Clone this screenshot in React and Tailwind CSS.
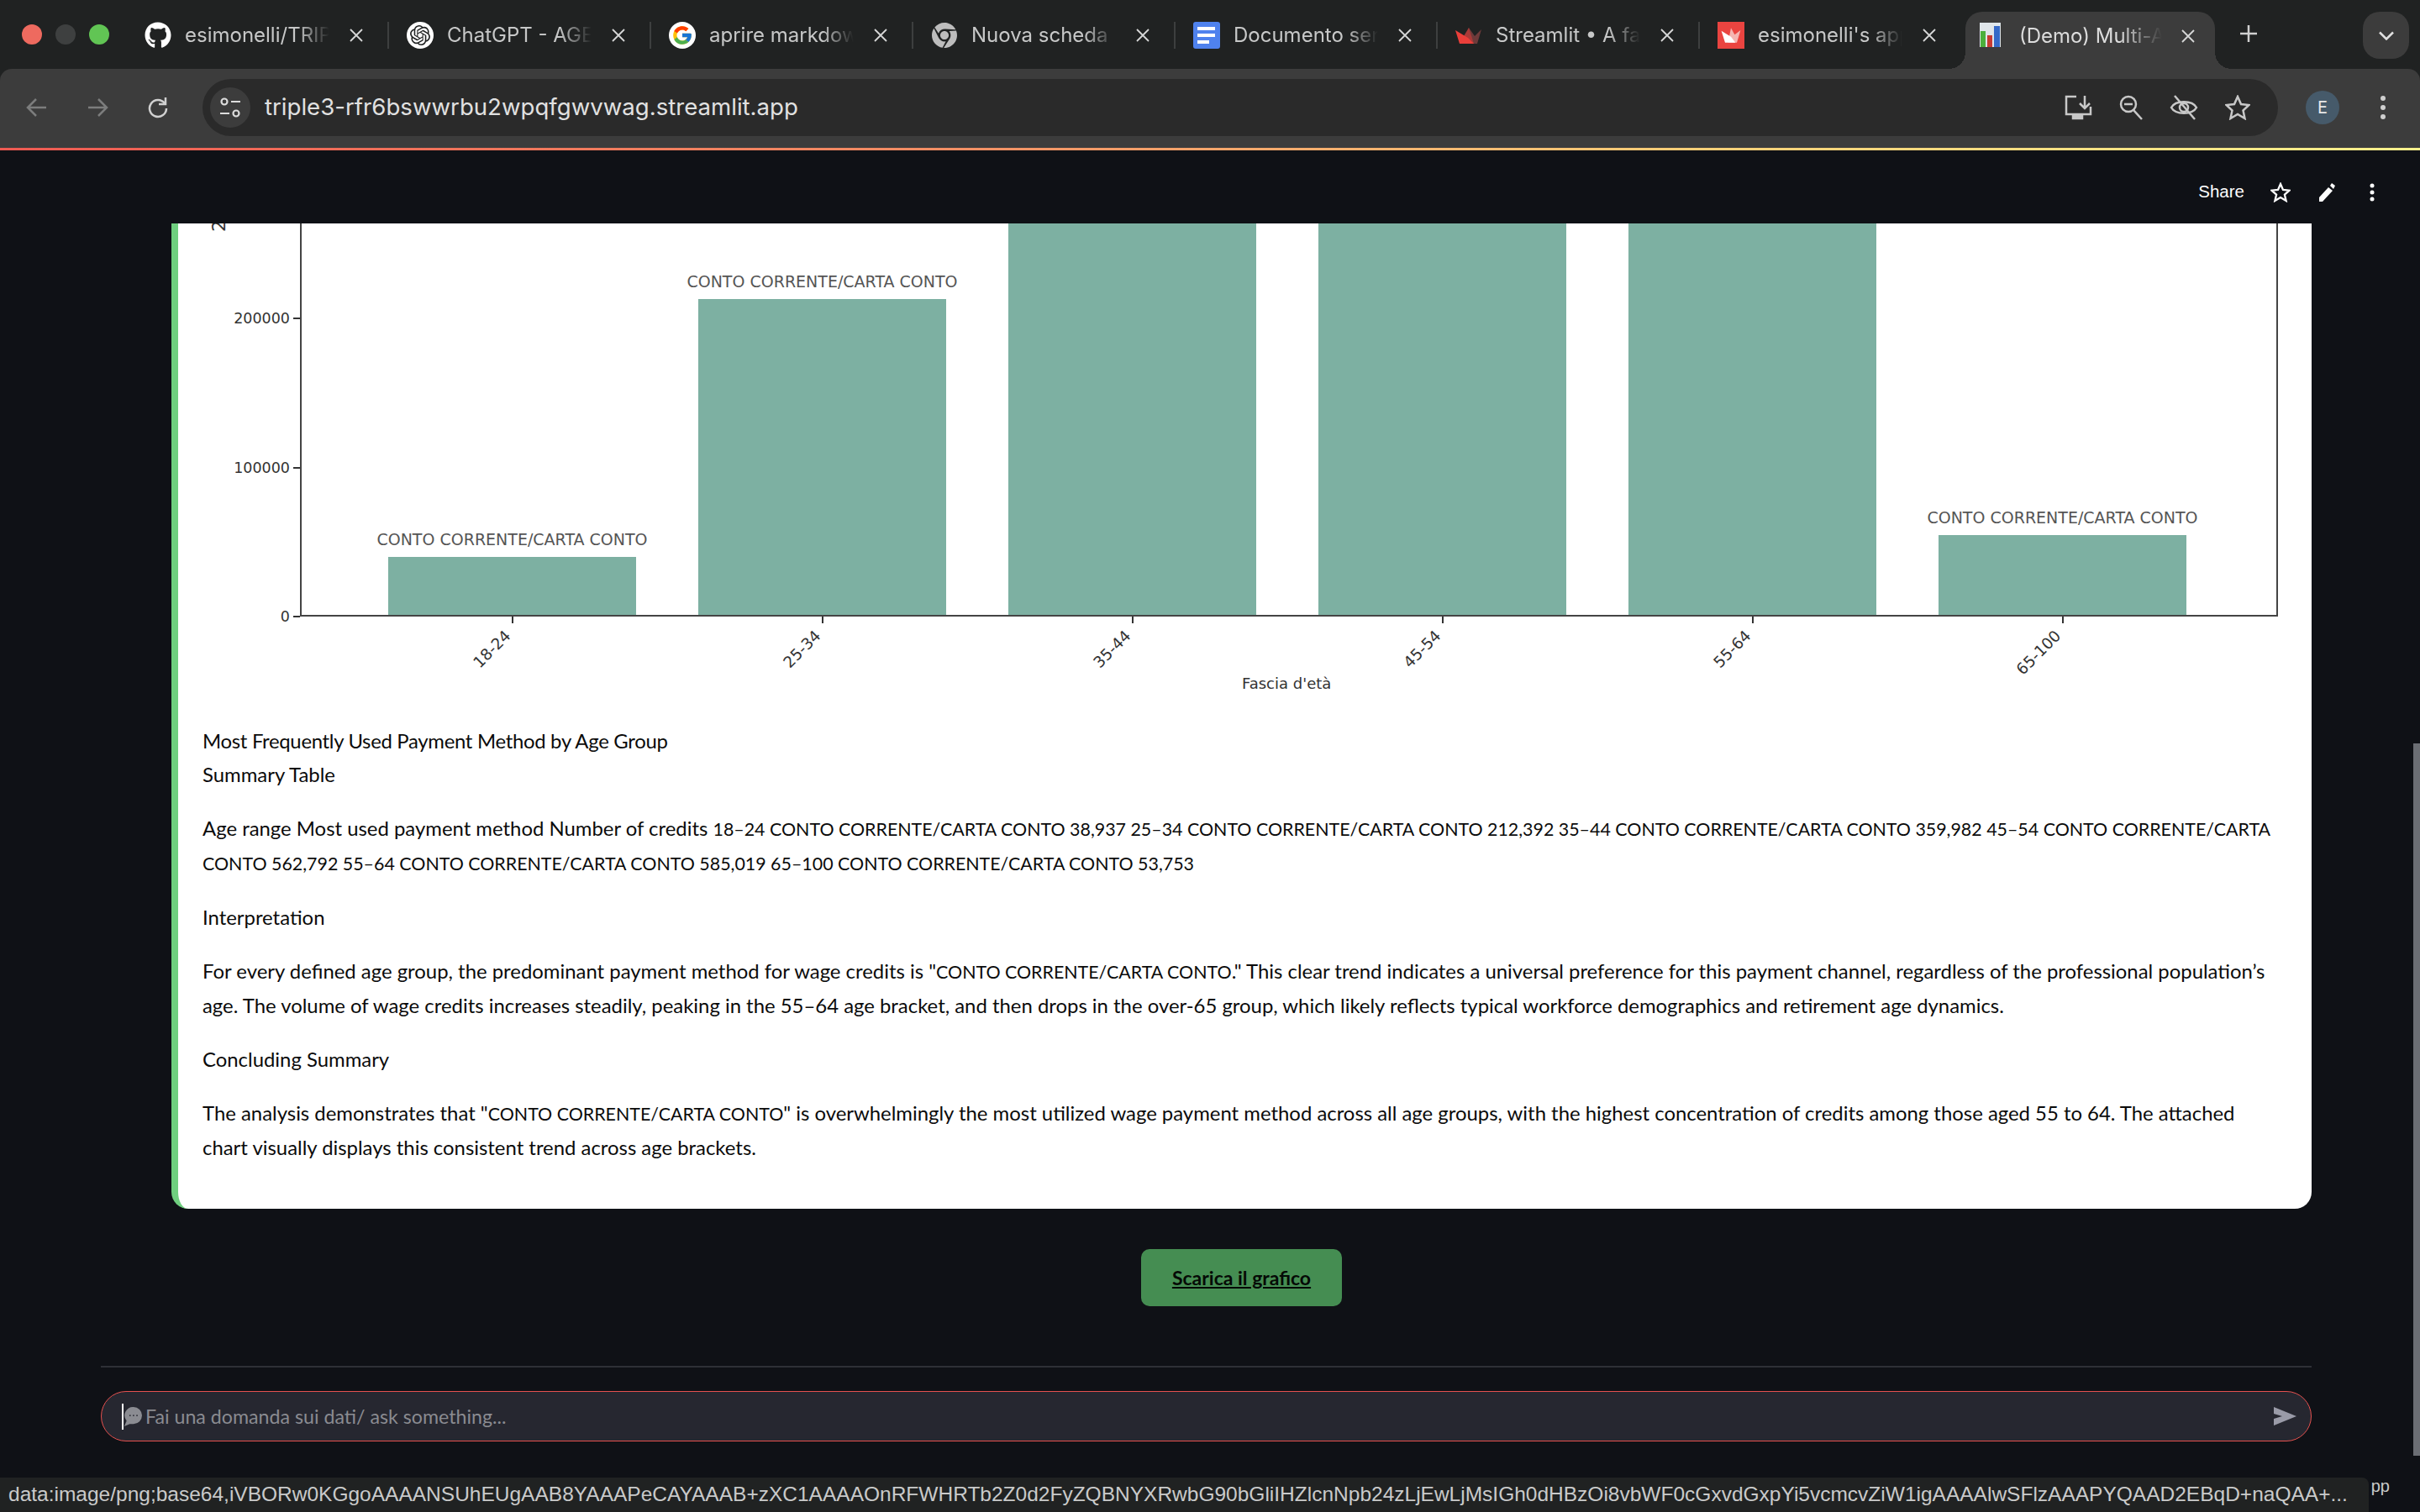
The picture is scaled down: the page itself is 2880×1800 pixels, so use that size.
import React from 'react';
import { FaGithub, FaChrome } from 'react-icons/fa';
import { FcGoogle } from 'react-icons/fc';
import { SiOpenai } from 'react-icons/si';

const Github = () => <FaGithub className="w-8 h-8 shrink-0 text-white" />;

const ChatGPT = () => (
  <div className="w-8 h-8 shrink-0 rounded-full bg-white flex items-center justify-center">
    <SiOpenai className="w-6 h-6 text-[#202222]" />
  </div>
);

const Google = () => (
  <div className="w-8 h-8 shrink-0 rounded-full bg-white flex items-center justify-center">
    <FcGoogle className="w-[26px] h-[26px]" />
  </div>
);

const Chrome = () => <FaChrome className="w-[30px] h-8 shrink-0 ml-[1px] mr-[1px] text-[#bdbdbd]" />;

const Docs = () => (
  <div className="w-8 h-8 shrink-0 rounded-[3px] bg-[#4f82ee] flex flex-col gap-[4px] pt-[6px] pl-[5px]">
    <div className="w-[21px] h-[4px] bg-white" />
    <div className="w-[21px] h-[4px] bg-white" />
    <div className="w-[14px] h-[4px] bg-white" />
  </div>
);

const Crown = () => (
  <svg viewBox="0 0 32 32" className="w-8 h-8 shrink-0">
    <path fill="#6e3a3a" d="M16 7l7 10 8-8-5 17H10z" />
    <path fill="#a83a38" d="M16 7l-6 10 9 9h3z" />
    <path fill="#ea3f3a" d="M0 10l15 9 7 7H5z" />
  </svg>
);

const CrownBox = () => (
  <div className="w-8 h-8 shrink-0 bg-[#ea4440] flex items-center justify-center">
    <svg viewBox="0 0 32 32" className="w-7 h-7">
      <path fill="#f5b5b2" d="M16 6l5 9 8-6-5 17H12z" />
      <path fill="#fff" d="M3 10l13 8 6 8H8z" />
    </svg>
  </div>
);

const ChartFav = () => (
  <svg viewBox="0 0 25 29" className="w-[25px] h-[29px] shrink-0">
    <rect width="25" height="29" fill="#dfe5ea" />
    <rect x="1" y="10" width="6" height="19" fill="#4caf3c" />
    <rect x="9" y="15" width="6" height="14" fill="#c83a32" />
    <rect x="17" y="4" width="7" height="25" fill="#3569c8" />
  </svg>
);

const CloseX = () => (
  <svg viewBox="0 0 16 16" className="w-4 h-4 shrink-0" fill="none" stroke="#d6d7d7" strokeWidth="1.800">
    <path d="M1 1l14 14M15 1L1 15" />
  </svg>
);

// Caps and digits run wider in Lato than in the original font
const Caps = ({ children }) => <span className="text-[21.400px]">{children}</span>;

const tabs = [
  { icon: <Github />, title: 'esimonelli/TRIPLE' },
  { icon: <ChatGPT />, title: 'ChatGPT - AGENT' },
  { icon: <Google />, title: 'aprire markdown' },
  { icon: <Chrome />, title: 'Nuova scheda' },
  { icon: <Docs />, title: 'Documento senza' },
  { icon: <Crown />, title: 'Streamlit • A faster' },
  { icon: <CrownBox />, title: "esimonelli's apps", last: true },
];

const bars = [
  { age: '18-24', height: 'h-[69px]', label: true },
  { age: '25-34', height: 'h-[376px]', label: true },
  { age: '35-44', height: 'h-[466px]' },
  { age: '45-54', height: 'h-[466px]' },
  { age: '55-64', height: 'h-[466px]' },
  { age: '65-100', height: 'h-[95px]', label: true },
];

const yTicks = [
  { value: '200000', top: 'top-[103px]' },
  { value: '100000', top: 'top-[281px]' },
  { value: '0', top: 'top-[458px]' },
];

function Tab({ icon, title, last }) {
  return (
    <div className="w-[312px] h-8 flex items-center shrink-0">
      {icon}
      <div className="ml-4 w-[172px] overflow-hidden whitespace-nowrap text-[24px] leading-8 text-[#c7c8c8] [mask-image:linear-gradient(to_right,black_78%,transparent)]">{title}</div>
      <div className="ml-6"><CloseX /></div>
      {!last && <div className="ml-[29px] w-[2px] h-8 bg-[#3d3f3f]" />}
    </div>
  );
}

function App() {
  return (
    <div className="w-[2880px] h-[1800px] overflow-hidden flex flex-col bg-[#0f1116] font-['Inter',sans-serif] relative">
      {/* Browser top */}
      <div className="bg-[#202222] shrink-0">
        {/* Chrome tab strip */}
        <div className="h-[82px] flex pt-[26px] relative">
          <div className="flex gap-4 ml-[26px] mr-[42px] h-6 mt-[3px]">
            <div className="w-6 h-6 rounded-full bg-[#ee6a5f]" />
            <div className="w-6 h-6 rounded-full bg-[#3e4040]" />
            <div className="w-6 h-6 rounded-full bg-[#61c554]" />
          </div>
          <div className="flex h-8">
            {tabs.map(t => <Tab key={t.title} {...t} />)}
          </div>
          {/* active tab */}
          <div className="absolute left-[2339px] top-[14px] w-[297px] h-[68px] bg-[#3c3c3c] rounded-t-[20px] flex items-start pt-[13px] pl-[17px]">
            <ChartFav />
            <div className="ml-[22px] w-[170px] overflow-hidden whitespace-nowrap text-[24px] leading-8 text-[#dcdcdc] [mask-image:linear-gradient(to_right,black_70%,transparent)]">(Demo) Multi-Agent</div>
            <div className="ml-[23px] mt-2"><CloseX /></div>
            <div className="absolute left-[-20px] bottom-0 w-5 h-5 bg-[radial-gradient(circle_at_0_0,transparent_20px,#3c3c3c_20px)]" />
            <div className="absolute right-[-20px] bottom-0 w-5 h-5 bg-[radial-gradient(circle_at_100%_0,transparent_20px,#3c3c3c_20px)]" />
          </div>
          <div className="absolute left-[2666px] top-[30px]">
            <svg viewBox="0 0 20 20" className="w-5 h-5" stroke="#d0d0d0" strokeWidth="2.500"><path d="M10 0v20M0 10h20" /></svg>
          </div>
          <div className="absolute left-[2812px] top-[14px] w-[55px] h-14 rounded-[20px] bg-[#3c3c3c] flex items-center justify-center">
            <svg viewBox="0 0 18 11" className="w-[18px] h-[11px]" fill="none" stroke="#e0e0e0" strokeWidth="2.500"><path d="M1 1.500l8 8 8-8" /></svg>
          </div>
        </div>

        {/* Chrome address bar */}
        <div className="h-[94px] bg-[#3c3c3c] rounded-t-[14px] flex items-center pl-[31px] pb-[2px]">
          <svg viewBox="0 0 26 26" className="w-[26px] h-[26px] shrink-0" fill="none" stroke="#7c7d7d" strokeWidth="2.500"><path d="M24 13H3M12 3L2 13l10 10" /></svg>
          <svg viewBox="0 0 26 26" className="w-[26px] h-[26px] shrink-0 ml-[46px]" fill="none" stroke="#7c7d7d" strokeWidth="2.500"><path d="M2 13h21M14 3l10 10-10 10" /></svg>
          <svg viewBox="0 0 26 26" className="w-[26px] h-[26px] shrink-0 ml-[46px]" fill="none" stroke="#d0d0d0" strokeWidth="2.500"><path d="M21 8a10 10 0 1 0 2 6" /><path d="M22 1v8h-8" /></svg>
          <div className="ml-10 w-[2470px] h-[68px] rounded-full bg-[#2a2a2a] flex items-center pl-[9px] pr-[33px] shrink-0">
            <div className="w-12 h-12 rounded-full bg-[#3c3c3c] flex items-center justify-center shrink-0">
              <svg viewBox="0 0 26 26" className="w-[26px] h-[26px]" fill="none" stroke="#dcdcdc" strokeWidth="2.200">
                <circle cx="6" cy="6" r="3.500" /><path d="M14 6h11M1 20h11" /><circle cx="20" cy="20" r="3.500" />
              </svg>
            </div>
            <div className="ml-[17px] text-[27.600px] text-[#e1e1e1]">triple3-rfr6bswwrbu2wpqfgwvwag.streamlit.app</div>
            <div className="ml-auto flex items-center gap-8">
              <svg viewBox="0 0 33 30" className="w-[33px] h-[30px]" fill="none" stroke="#c8c8c8" strokeWidth="2.500">
                <path d="M14 2H2v21h29V14" /><path d="M10 24v4h11v-4" fill="#c8c8c8" /><path d="M24 1v14M18 10l6 6 6-6" />
              </svg>
              <svg viewBox="0 0 28 30" className="w-7 h-[30px]" fill="none" stroke="#c8c8c8" strokeWidth="2.500">
                <circle cx="11" cy="11" r="9" /><path d="M6 11h10M17 18l10 11" />
              </svg>
              <svg viewBox="0 0 34 30" className="w-[34px] h-[30px]" fill="none" stroke="#c8c8c8" strokeWidth="2.500">
                <path d="M2 15C7 6 27 6 32 15 27 24 7 24 2 15z" /><circle cx="17" cy="15" r="5" /><path d="M6 1l24 28" />
              </svg>
              <svg viewBox="0 0 30 30" className="w-[30px] h-[30px]" fill="none" stroke="#c8c8c8" strokeWidth="2.500">
                <path d="M15 2l4 9 9.500 1-7 6.500 2 9.500-8.500-5-8.500 5 2-9.500-7-6.500 9.500-1z" />
              </svg>
            </div>
          </div>
          <div className="ml-[33px] w-10 h-10 rounded-full bg-[#465a6a] text-[#e8e8e8] text-[20px] flex items-center justify-center shrink-0">E</div>
          <svg viewBox="0 0 6 28" className="w-[6px] h-7 ml-[49px] shrink-0" fill="#cfcfcf"><circle cx="3" cy="3" r="3" /><circle cx="3" cy="14" r="3" /><circle cx="3" cy="25" r="3" /></svg>
        </div>
      </div>

      {/* Streamlit top decoration */}
      <div className="h-[3px] shrink-0 bg-[linear-gradient(to_right,#ee5a52,#f39065_40%,#fccf78_70%,#fdf08c)]" />

      {/* Streamlit page */}
      <div className="flex-1 flex flex-col relative overflow-hidden">
        {/* Streamlit header */}
        <div className="h-[87px] shrink-0 flex items-center justify-end pr-[54px] pt-3 font-['Liberation_Sans',sans-serif]">
          <span className="text-[20.500px] text-white">Share</span>
          <svg viewBox="0 0 24 24" className="w-6 h-6 ml-[31px]" fill="none" stroke="#fff" strokeWidth="2.300"><path d="M12 2l3 7 7.500.7-5.600 5 1.700 7.300-6.600-3.900-6.600 3.900 1.700-7.300-5.600-5L9 9z" /></svg>
          <svg viewBox="0 0 20 24" className="w-5 h-6 ml-[33px]" fill="#fff"><path d="M1 23v-5L12 6l5 4L5 23zM14 4l2-3 4 3-2 4z" /></svg>
          <svg viewBox="0 0 6 24" className="w-[6px] h-6 ml-[41px]" fill="#fff"><circle cx="3" cy="4" r="2.500" /><circle cx="3" cy="12" r="2.500" /><circle cx="3" cy="20" r="2.500" /></svg>
        </div>

        {/* Message card */}
        <div className="ml-[204px] w-[2547px] h-[1173px] shrink-0 bg-white rounded-b-[20px] border-l-[8px] border-[#6fcf7f] text-black overflow-hidden">
          {/* Chart */}
          <div className="h-[596px] relative font-['DejaVu_Sans',sans-serif]">
            <div className="absolute left-[42px] top-[-9px] w-3 h-[24px] flex items-center justify-center text-[22px] text-[#333] rotate-[-90deg]">2</div>
            <div className="absolute left-[145px] top-0 w-[2354px] h-[468px] border-l-2 border-r-2 border-b-2 border-[#444] flex gap-[74px] pl-[103px] items-end">
              {bars.map(b => (
                <div key={b.age} className="w-[295px] flex flex-col items-center relative">
                  {b.label && <div className="absolute bottom-full mb-[7px] whitespace-nowrap text-[19px] text-[#555]">CONTO CORRENTE/CARTA CONTO</div>}
                  <div className={`w-full bg-[#7db0a2] ${b.height}`} />
                  <div className="absolute top-full mt-[2px] w-[2px] h-2 bg-[#333]" />
                  <div className="absolute top-[calc(100%+12px)] right-[162px] text-[18.500px] text-[#333] rotate-[-45deg] origin-top-right whitespace-nowrap">{b.age}</div>
                </div>
              ))}
            </div>
            {yTicks.map(t => (
              <div key={t.value} className={`absolute left-[57px] w-[88px] flex items-center justify-end gap-1 text-[17.500px] leading-5 text-[#333] ${t.top}`}>
                {t.value}<div className="w-2 h-[2px] bg-[#333]" />
              </div>
            ))}
            <div className="absolute left-[1266px] top-[534px] text-[18px] text-[#333]">Fascia d'età</div>
          </div>

          {/* Response text */}
          <div className="pl-[29px] pr-[8px] text-[23.900px] leading-[40px] text-[#0b0b0b] font-['Lato',sans-serif]">
            <p><span className="tracking-[-0.3px]">Most Frequently Used Payment Method by Age Group</span><br />Summary Table</p>
            <p className="mt-6">Age range Most used payment method Number of credits <Caps>18–24 CONTO CORRENTE/CARTA CONTO 38,937 25–34 CONTO CORRENTE/CARTA CONTO 212,392 35–44 CONTO CORRENTE/CARTA CONTO 359,982 45–54 CONTO CORRENTE/CARTA</Caps><br /><Caps>CONTO 562,792 55–64 CONTO CORRENTE/CARTA CONTO 585,019 65–100 CONTO CORRENTE/CARTA CONTO 53,753</Caps></p>
            <p className="mt-6">Interpretation</p>
            <p className="mt-6">For every defined age group, the predominant payment method for wage credits is "<Caps>CONTO CORRENTE/CARTA CONTO</Caps>." This clear trend indicates a universal preference for this payment channel, regardless of the professional population’s<br />age. The volume of wage credits increases steadily, peaking in the 55–64 age bracket, and then drops in the over-65 group, which likely reflects typical workforce demographics and retirement age dynamics.</p>
            <p className="mt-6">Concluding Summary</p>
            <p className="mt-6">The analysis demonstrates that "<Caps>CONTO CORRENTE/CARTA CONTO</Caps>" is overwhelmingly the most utilized wage payment method across all age groups, with the highest concentration of credits among those aged 55 to 64. The attached<br />chart visually displays this consistent trend across age brackets.</p>
          </div>
        </div>

        {/* Download button */}
        <div className="mt-12 ml-[1358px] w-[239px] h-[68px] shrink-0 rounded-[10px] bg-[#458d52] flex items-center justify-center text-[23px] font-bold text-[#050a06] underline font-['Lato',sans-serif]">Scarica il grafico</div>

        {/* Chat input */}
        <div className="mt-[71px] ml-[120px] w-[2631px] border-t-2 border-[#2e3036] pt-7 shrink-0">
          <div className="h-[60px] rounded-[30px] border border-[#e5514f] bg-[#262730] flex items-center pl-[24px] pr-[17px]">
            <div className="w-[2px] h-[31px] bg-white shrink-0" />
            <svg viewBox="0 0 24 26" className="w-[22px] h-6 shrink-0" fill="#8b8c92">
              <path d="M13 1a11 11 0 0 1 0 22H8l-7 3 3-7A11 11 0 0 1 13 1z" />
              <circle cx="8.500" cy="12" r="1" fill="#262730" /><circle cx="13" cy="12" r="1" fill="#262730" /><circle cx="17.500" cy="12" r="1" fill="#262730" />
            </svg>
            <span className="ml-[4px] text-[23.200px] text-[#8a8b91] font-['Lato',sans-serif]">Fai una domanda sui dati/ ask something...</span>
            <svg viewBox="0 0 27 22" className="w-[27px] h-[22px] ml-auto" fill="#9a9ba8"><path d="M0 0l27 11L0 22v-8l10-3L0 8z" /></svg>
          </div>
        </div>

        {/* Scrollbar */}
        <div className="absolute right-0 top-[706px] w-2 bottom-[67px] bg-[#6b6e74]" />
      </div>

      {/* Link preview status */}
      <div className="absolute left-0 bottom-0 w-[2819px] h-[41px] bg-[#202222] rounded-tr-[8px] flex items-center pl-[10px] text-[24.500px] text-[#c9caca] whitespace-nowrap overflow-hidden font-['Liberation_Sans',sans-serif]">data:image/png;base64,iVBORw0KGgoAAAANSUhEUgAAB8YAAAPeCAYAAAB+zXC1AAAAOnRFWHRTb2Z0d2FyZQBNYXRwbG90bGliIHZlcnNpb24zLjEwLjMsIGh0dHBzOi8vbWF0cGxvdGxpYi5vcmcvZiW1igAAAAlwSFlzAAAPYQAAD2EBqD+naQAA+...</div>
      <div className="absolute right-[36px] bottom-4 text-[20px] text-[#c9caca] font-['Liberation_Sans',sans-serif]">pp</div>
    </div>
  );
}

export default App;
